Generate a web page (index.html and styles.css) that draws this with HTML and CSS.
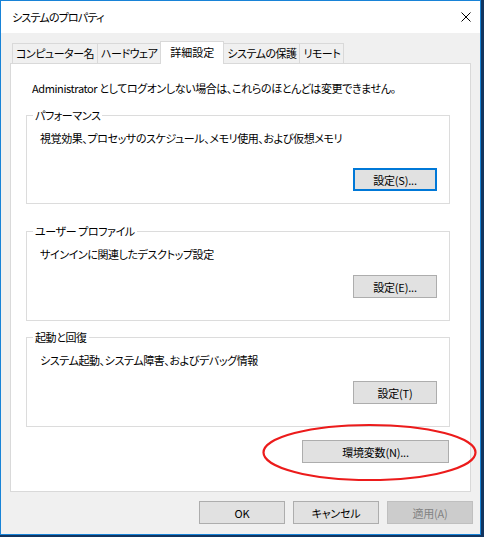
FILE: index.html
```html
<!DOCTYPE html>
<html lang="ja">

<head>
  <meta charset="UTF-8">
  <meta name="viewport" content="width=device-width, initial-scale=1.0">
  <title>システムのプロパティ</title>
  <link rel="stylesheet" href="styles.css">
</head>

<body>
  <div class="window">
    <div class="titlebar">
      <span class="title">システムのプロパティ</span>
      <svg class="close" width="10" height="10" viewBox="0 0 10 10">
        <path d="M0.5 0.5 L9.5 9.5 M9.5 0.5 L0.5 9.5" stroke="#000" stroke-width="1" fill="none" />
      </svg>
    </div>

    <div class="dialog">
      <div class="tabs">
        <div class="tab">コンピューター名</div>
        <div class="tab">ハードウェア</div>
        <div class="tab active">詳細設定</div>
        <div class="tab">システムの保護</div>
        <div class="tab">リモート</div>
      </div>

      <div class="panel">
        <p class="notice">Administrator としてログオンしない場合は、これらのほとんどは変更できません。</p>

        <fieldset class="group group-perf">
          <legend>パフォーマンス</legend>
          <p>視覚効果、プロセッサのスケジュール、メモリ使用、および仮想メモリ</p>
          <div class="group-actions">
            <button class="btn btn-default">設定(S)...</button>
          </div>
        </fieldset>

        <fieldset class="group group-profile">
          <legend>ユーザー プロファイル</legend>
          <p>サインインに関連したデスクトップ設定</p>
          <div class="group-actions">
            <button class="btn">設定(E)...</button>
          </div>
        </fieldset>

        <fieldset class="group group-startup">
          <legend>起動と回復</legend>
          <p>システム起動、システム障害、およびデバッグ情報</p>
          <div class="group-actions">
            <button class="btn">設定(T)</button>
          </div>
        </fieldset>

        <div class="env-row">
          <div class="env-wrap">
            <button class="btn btn-wide">環境変数(N)...</button>
            <!-- red marker drawn over the button -->
            <svg class="marker" width="217" height="59" viewBox="0 0 217 59">
              <ellipse cx="108.5" cy="29.5" rx="106" ry="27.5" fill="none" stroke="#ec1b1b" stroke-width="2.2" />
            </svg>
          </div>
        </div>
      </div>

      <div class="footer">
        <button class="btn btn-footer">OK</button>
        <button class="btn btn-footer">キャンセル</button>
        <button class="btn btn-footer" disabled>適用(A)</button>
      </div>
    </div>
  </div>
</body>

</html>
```

FILE: styles.css
```css
* {
  box-sizing: border-box;
}

body {
  margin: 0;
  background-color: #12355f;
  font-family: "Noto Sans CJK JP", "Noto Sans", sans-serif;
  font-size: 11px;
  letter-spacing: -0.4px;
  font-feature-settings: "palt";
  color: #000;
}

.window {
  width: 481px;
  height: 535px;
  border: 1px solid #1883d7;
  background-color: #f0f0f0;
  display: flex;
  flex-direction: column;
}

.titlebar {
  height: 32px;
  background-color: #fff;
  display: flex;
  align-items: center;
  justify-content: space-between;
  padding: 0 9px 0 11px;
}

.title {
  line-height: 16px;
  letter-spacing: -0.8px;
}

.close {
  display: block;
}

.dialog {
  padding: 8px 0 0 9px;
}

/* tab strip */
.tabs {
  display: flex;
  align-items: flex-end;
  height: 22px;
  padding-left: 2px;
}

.tab {
  height: 20px;
  padding: 0 3px;
  line-height: 19px;
  letter-spacing: -0.5px;
  border: 1px solid #d9d9d9;
  border-bottom: none;
  background-color: #f0f0f0;
  white-space: nowrap;
}

.tab + .tab {
  margin-left: -1px;
}

.tab.active {
  position: relative;
  z-index: 1;
  height: 23px;
  margin-bottom: -1px;
  padding: 0 9px;
  line-height: 21px;
  letter-spacing: 0;
  background-color: #fff;
}

.panel {
  width: 461px;
  height: 429px;
  border: 1px solid #d9d9d9;
  background-color: #fff;
  padding: 16px 20px 0 15px;
}

.notice {
  margin: 0 0 11px 6px;
  line-height: 16px;
}

/* group boxes */
.group {
  margin: 0;
  border: 1px solid #dcdcdc;
  padding: 7px 12px 12px 13px;
}

.group legend {
  margin-left: -7px;
  padding: 0 2px;
  line-height: 16px;
}

.group p {
  margin: 0;
  line-height: 16px;
}

.group-actions {
  display: flex;
  justify-content: flex-end;
  margin-top: 13px;
}

.group-perf .group-actions {
  margin-top: 22px;
}

.group-profile {
  margin-top: 19px;
  padding-bottom: 22px;
}

.group-startup {
  margin-top: 8px;
  padding-bottom: 22px;
}

.env-row {
  display: flex;
  justify-content: flex-end;
  margin-top: 13px;
  padding-right: 1px;
}

.env-wrap {
  position: relative;
}

.marker {
  position: absolute;
  left: -41px;
  top: -17px;
  pointer-events: none;
}

/* buttons */
.btn {
  display: block;
  width: 84px;
  height: 23px;
  padding: 0;
  border: 1px solid #adadad;
  background-color: #e1e1e1;
  font-family: inherit;
  font-size: 11px;
  letter-spacing: -0.2px;
  font-feature-settings: "palt";
  color: #000;
}

.btn-default {
  border: 2px solid #0078d7;
}

.btn-wide {
  width: 147px;
}

.footer {
  display: flex;
  justify-content: flex-end;
  gap: 8px;
  margin-top: 9px;
  padding-right: 7px;
}

.btn-footer {
  width: 86px;
}

.btn:disabled {
  background-color: #cccccc;
  border-color: #bfbfbf;
  color: #838383;
}
```
